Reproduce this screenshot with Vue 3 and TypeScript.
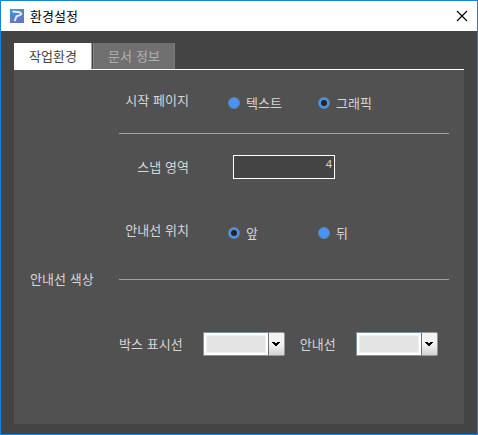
<script setup lang="ts">
import { ref } from 'vue'

const tabs: string[] = ['작업환경', '문서 정보']
const activeTab = ref(0)
const startPage = ref('그래픽')
const guidePosition = ref('앞')
const snapArea = ref('4')
const startOptions: string[] = ['텍스트', '그래픽']
const positionOptions: string[] = ['앞', '뒤']
const colorFields: string[] = ['박스 표시선', '안내선']
</script>

<template>
  <div class="window">
    <header class="titlebar">
      <svg class="logo" width="14" height="14" viewBox="0 0 14 14">
        <defs>
          <linearGradient id="logo-bg" x1="0" y1="0" x2="0.3" y2="1">
            <stop offset="0" stop-color="#369bdc" />
            <stop offset="1" stop-color="#6674c5" />
          </linearGradient>
        </defs>
        <rect width="14" height="14" fill="url(#logo-bg)" />
        <path d="M2.5 2.5L7.6 3Q11.6 3.4 11.2 5.2Q10.5 6.6 6.6 7.2L4.6 12.2" fill="none" stroke="#e5edf8" stroke-width="1.9" />
      </svg>
      <span class="title">환경설정</span>
      <svg class="close" width="12" height="12" viewBox="0 0 12 12">
        <path d="M1 1L11 11M11 1L1 11" stroke="#000" stroke-width="1.15" />
      </svg>
    </header>

    <main class="body">
      <nav class="tabs">
        <button
          v-for="(tab, i) in tabs"
          :key="tab"
          class="tab"
          :class="{ active: i === activeTab }"
          @click="activeTab = i"
        >{{ tab }}</button>
      </nav>

      <section class="panel">
        <div class="row start">
          <span class="label">시작 페이지</span>
          <div class="radios">
            <label v-for="o in startOptions" :key="o" class="radio" @click="startPage = o">
              <i class="dot" :class="{ on: o === startPage }"></i>{{ o }}
            </label>
          </div>
        </div>
        <hr class="rule" />
        <div class="row snap">
          <span class="label">스냅 영역</span>
          <input v-model="snapArea" class="field" type="text" />
        </div>
        <div class="row position">
          <span class="label">안내선 위치</span>
          <div class="radios">
            <label v-for="o in positionOptions" :key="o" class="radio" @click="guidePosition = o">
              <i class="dot" :class="{ on: o === guidePosition }"></i>{{ o }}
            </label>
          </div>
        </div>
        <div class="section">
          <span>안내선 색상</span>
          <hr class="rule" />
        </div>
        <div class="colors">
          <div v-for="f in colorFields" :key="f" class="color">
            <span>{{ f }}</span>
            <div class="combo">
              <div class="well"><div class="swatch"></div></div>
              <div class="arrow">
                <svg width="8" height="4" viewBox="0 0 8 4" shape-rendering="crispEdges">
                  <path d="M0 0h3v1h2V0h3v1H7v1H6v1H5v1H3V3H2V2H1V1H0z" fill="#000" />
                </svg>
              </div>
            </div>
          </div>
        </div>
      </section>
    </main>
  </div>
</template>

<style>
body {
  margin: 0;
}
</style>

<style scoped>
.window {
  box-sizing: border-box;
  width: 478px;
  height: 435px;
  display: flex;
  flex-direction: column;
  border: 1px solid #1883d7;
  background: #444;
  color: #d6d6d6;
  font: 13px/18px "Noto Sans CJK KR", sans-serif;
  font-weight: 400;
  word-spacing: 1px;
  white-space: nowrap;
}
.titlebar {
  height: 30px;
  flex: none;
  box-sizing: border-box;
  display: flex;
  align-items: center;
  padding: 0 9px 1px;
  background: #fff;
  color: #000;
}
.title {
  margin-left: 6px;
  flex: 1;
}
.body {
  flex: 1;
  display: flex;
  flex-direction: column;
  padding: 12px 13px 10px;
}
.tabs {
  display: flex;
  height: 26px;
  gap: 1px;
  border-bottom: 1px solid #fff;
}
.tab {
  box-sizing: border-box;
  height: 26px;
  width: 82px;
  padding: 0;
  border: 0;
  border-left: 1px solid #858585;
  border-right: 1px solid #7b7b7b;
  background: #707070;
  color: #b0b0b0;
  font: inherit;
  word-spacing: inherit;
}
.tab.active {
  width: 78px;
  padding-left: 1px;
  border-left: 0;
  border-right: 1px solid #a0a0a0;
  background: #fff;
  color: #444;
}
.panel {
  flex: 1;
  box-sizing: border-box;
  background: #515151;
  padding: 16px 15px 0 16px;
}
.row {
  display: flex;
  box-sizing: border-box;
}
.label {
  width: 159px;
  text-align: right;
}
.row.start {
  height: 47px;
  padding-top: 5px;
}
.radios {
  display: flex;
  margin-left: 39px;
  padding-top: 3px;
}
.radio {
  display: flex;
  width: 90px;
  height: 18px;
  align-items: center;
}
.dot {
  box-sizing: border-box;
  width: 12px;
  height: 12px;
  margin-right: 6px;
  border: 1px solid #66809f;
  border-radius: 50%;
  background: #4794f5;
}
.dot.on {
  background: radial-gradient(circle, #252525 0 2.7px, #4794f5 3.5px);
}
.rule {
  width: 330px;
  height: 1px;
  margin: 0 0 0 auto;
  border: 0;
  background: #a3a3a3;
}
.row.snap {
  height: 67px;
  padding-top: 21px;
}
.snap .label {
  padding-top: 3px;
}
.field {
  box-sizing: border-box;
  width: 102px;
  height: 24px;
  margin-left: 44px;
  padding: 0 2px 7px;
  border: 1px solid #fff;
  border-radius: 0;
  outline: 0;
  background: #444;
  color: #d6d6d6;
  font: 11px/15px "Noto Sans", sans-serif;
  text-align: right;
}
.row.position {
  height: 69px;
  padding-top: 20px;
}
.section {
  display: flex;
  align-items: center;
  height: 18px;
}
.colors {
  display: flex;
  gap: 15px;
  margin: 44px 0 0 89px;
}
.color {
  display: flex;
  align-items: center;
  gap: 20px;
}
.combo {
  display: flex;
  width: 82px;
  height: 24px;
}
.well {
  box-sizing: border-box;
  width: 66px;
  padding: 2px;
  border: 1px solid #7c93a5;
  border-right-color: #707070;
  background: #fff;
}
.swatch {
  height: 100%;
  box-sizing: border-box;
  border: 1px solid #f1f1f1;
  background: #e4e4e4;
}
.arrow {
  box-sizing: border-box;
  width: 16px;
  display: flex;
  align-items: center;
  justify-content: center;
  border: 1px solid #979797;
  border-left: 0;
  border-radius: 0 2px 2px 0;
  background: linear-gradient(#f3f3f3 50%, #d2d2d2);
}
</style>
